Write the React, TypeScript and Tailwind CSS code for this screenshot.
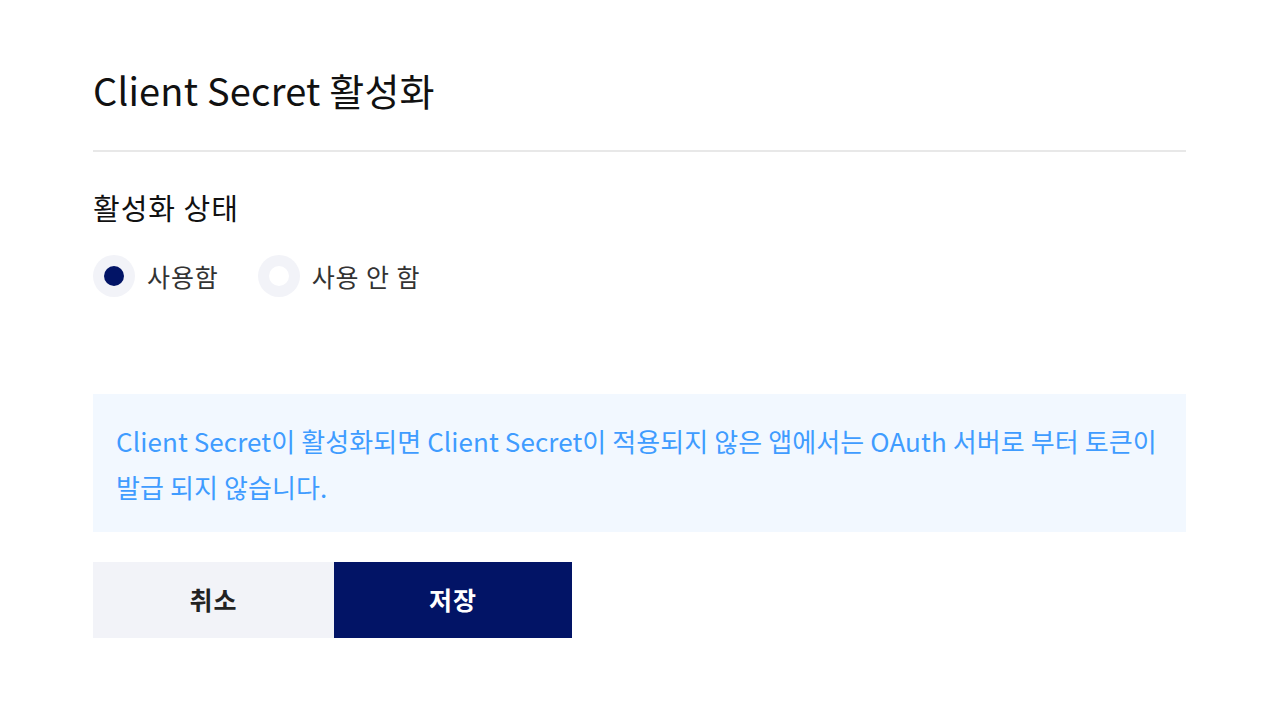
import { useState } from 'react'

const font = { fontFamily: '"Noto Sans CJK KR", "Noto Sans", sans-serif' }

export default function App() {
  const [enabled, setEnabled] = useState(true)

  return (
    <div className="min-h-screen bg-white text-[#111111]" style={font}>
      <div className="w-[1093px] ml-[93px] pt-[62px]">
        <h1 className="text-[38px] leading-[56px] font-normal tracking-[0.2px]">Client Secret 활성화</h1>
        <div className="mt-[32px] h-[2px] bg-[#e8e8e8]" />

        <h2 className="mt-[37px] text-[29px] leading-[36px] tracking-[1px]">활성화 상태</h2>
        <div className="mt-[30px] flex items-center gap-[39px]">
          <Radio checked={enabled} onClick={() => setEnabled(true)} label="사용함" />
          <Radio checked={!enabled} onClick={() => setEnabled(false)} label="사용 안 함" />
        </div>

        <div className="mt-[97px] h-[138px] bg-[#f2f8ff] px-[23px] pt-[24px]">
          <p className="text-[26px] leading-[46px] text-[#3f9cff] tracking-[0.1px] whitespace-nowrap">
            Client Secret이 활성화되면 Client Secret이 적용되지 않은 앱에서는 OAuth 서버로 부터 토큰이
            <br />
            발급 되지 않습니다.
          </p>
        </div>

        <div className="mt-[30px] flex">
          <button type="button" className="w-[241px] h-[76px] bg-[#f2f3f8] text-[25px] font-bold tracking-[1px] text-[#222222]">취소</button>
          <button type="button" className="w-[238px] h-[76px] bg-[#021466] text-[25px] font-bold tracking-[1px] text-white">저장</button>
        </div>
      </div>
    </div>
  )
}

function Radio({ checked, onClick, label }: { checked: boolean; onClick: () => void; label: string }) {
  return (
    <button type="button" onClick={onClick} className="flex items-center gap-[12px]">
      <span className="w-[42px] h-[42px] rounded-full bg-[#f2f3f8] flex items-center justify-center">
        <span className={checked ? 'w-[20px] h-[20px] rounded-full bg-[#021466]' : 'w-[20px] h-[20px] rounded-full bg-white'} />
      </span>
      <span className="text-[25px] leading-[34px] tracking-[0.9px] text-[#333333]">{label}</span>
    </button>
  )
}
